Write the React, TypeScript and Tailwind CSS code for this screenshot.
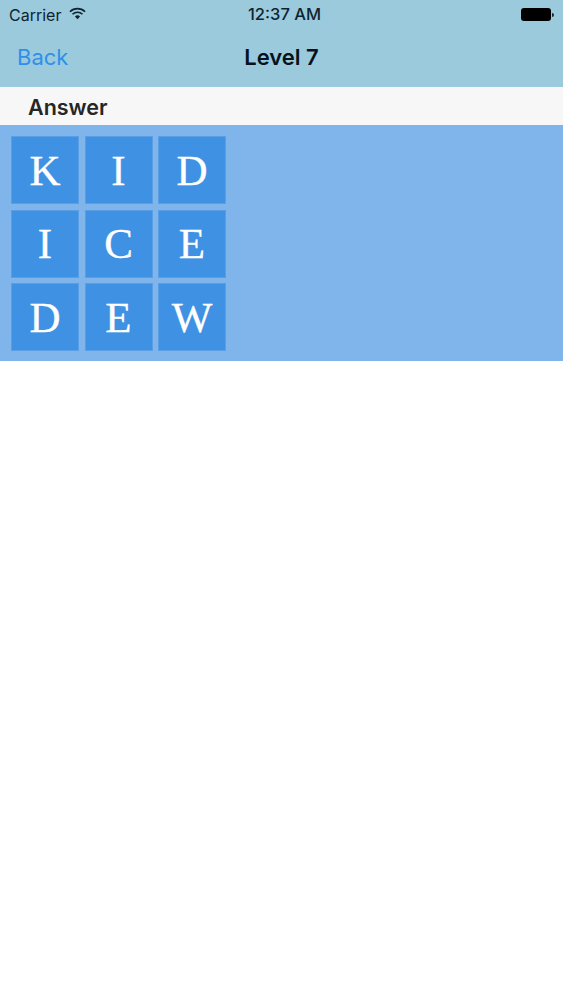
const rows = [
  ['K', 'I', 'D'],
  ['I', 'C', 'E'],
  ['D', 'E', 'W'],
];

function Wifi() {
  return (
    <svg width="17" height="13" viewBox="0 0 18 13" className="ml-[8px] mb-[3px]">
      <path d="M1 4.6a11.4 11.4 0 0 1 16 0" fill="none" stroke="#0f2430" strokeWidth="1.7" />
      <path d="M3.7 7.3a7.6 7.6 0 0 1 10.6 0" fill="none" stroke="#0f2430" strokeWidth="1.7" />
      <path d="M6.3 9.7a3.9 3.9 0 0 1 5.4 0L9 12.6z" fill="#0f2430" />
    </svg>
  );
}

function Battery() {
  return (
    <div className="flex items-center">
      <div className="h-[13px] w-[30px] rounded-[3px] bg-black" />
      <div className="ml-px h-[4px] w-[2px] rounded-r-sm bg-[#1a2a33]" />
    </div>
  );
}

export default function App() {
  return (
    <div className="min-h-[1000px] bg-white font-['Inter','Liberation_Sans',sans-serif]">
      <div className="h-[87px] bg-[#9bcadd]">
        <div className="relative flex h-[29px] items-center justify-between px-[9px] text-[16px] text-[#0f2430]">
          <div className="flex items-center">
            <span>Carrier</span>
            <Wifi />
          </div>
          <span className="absolute left-[6px] right-0 text-center text-[16.5px] font-medium">12:37 AM</span>
          <Battery />
        </div>
        <div className="relative flex h-[57px] items-center px-[17px]">
          <span className="text-[22px] text-[#2f8fea]">Back</span>
          <span className="absolute left-0 right-0 text-center text-[22px] font-semibold text-[#07131c]">Level 7</span>
        </div>
      </div>
      <div className="flex h-[38px] items-center bg-[#f7f7f8] pl-[28px] pt-[3px] text-[21.5px] font-semibold text-[#262626]">
        Answer
      </div>
      <div className="flex h-[236px] flex-col gap-[5.5px] bg-[#80b5ec] pl-[11px] pt-[11px]">
        {rows.map((row, i) => (
          <div key={i} className="flex gap-[5.5px]">
            {row.map((letter, j) => (
              <div
                key={j}
                className="flex h-[68px] w-[68px] items-center justify-center border border-[#5a9fe6] bg-[#3f92e3] font-['Liberation_Serif',serif] text-[43px] leading-none text-white [-webkit-text-stroke:0.3px_white]"
              >
                {letter}
              </div>
            ))}
          </div>
        ))}
      </div>
    </div>
  );
}
